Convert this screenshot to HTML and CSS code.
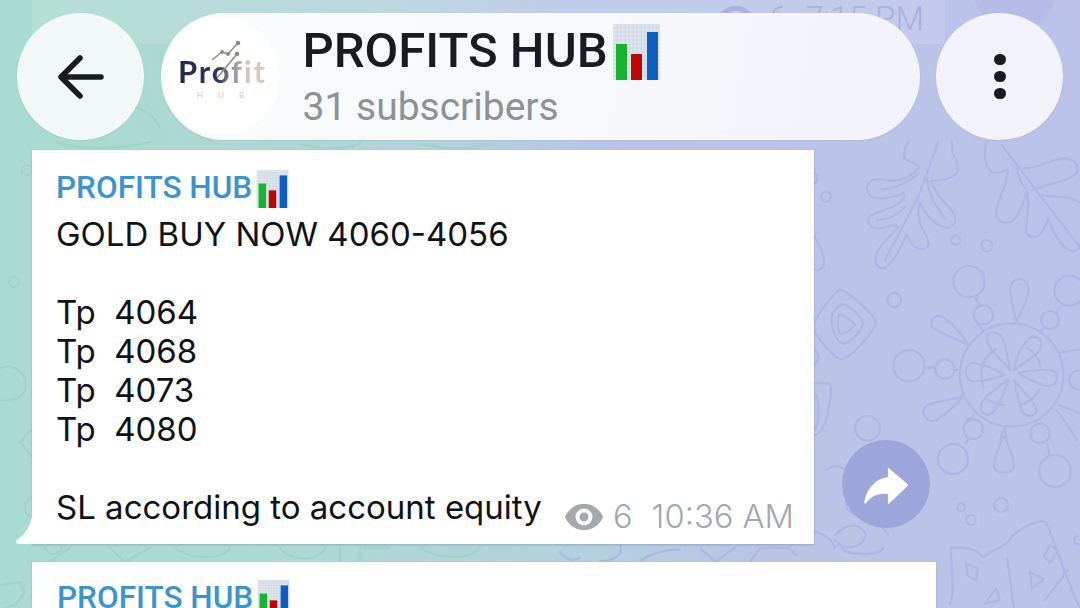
FILE: index.html
```html
<!DOCTYPE html>
<html lang="en">
<head>
<meta charset="utf-8">
<title>PROFITS HUB</title>
<link rel="stylesheet" href="styles.css">
</head>
<body>
<svg width="0" height="0" class="defs">
  <defs>
    <symbol id="bars" viewBox="0 0 47 56">
      <rect width="47" height="56" fill="#dfe5ee"/>
      <path d="M0 4H47M0 8H47M0 12H47M0 16H47M0 20H47M0 24H47M0 28H47M0 32H47M0 36H47M0 40H47M0 44H47M0 48H47M0 52H47M4 0V56M8 0V56M12 0V56M16 0V56M20 0V56M24 0V56M28 0V56M32 0V56M36 0V56M40 0V56M44 0V56" stroke="#c8d2e0" stroke-width=".6"/>
      <rect x="3" y="20" width="11" height="36" fill="#12b52b"/>
      <rect x="18" y="30" width="11" height="26" fill="#bd0606"/>
      <rect x="34" y="8" width="11" height="48" fill="#0c5fc0"/>
    </symbol>
    <symbol id="eye" viewBox="0 0 38 26">
      <path fill-rule="evenodd" d="M19 0C30 0 36 8 38 13C36 18 30 26 19 26C8 26 2 18 0 13C2 8 8 0 19 0ZM19 4.500A8.500 8.500 0 1 0 19 21.500A8.500 8.500 0 1 0 19 4.500ZM19 8.500A4.500 4.500 0 1 1 19 17.500A4.500 4.500 0 1 1 19 8.500Z"/>
    </symbol>
  </defs>
</svg>

<div class="screen">
  <svg class="wallpaper" viewBox="0 0 1080 608" width="1080" height="608" fill="none">
    <circle class="old-forward" cx="1015" cy="-12" r="42"/>
    <g class="lines-blue">
      <g transform="translate(810 140) scale(.33333)" class="crop-space">
        <path d="M295 5C280 25 275 55 295 62C310 68 322 70 328 82C300 115 265 125 235 122C205 112 175 118 170 142C172 172 200 182 235 172C255 168 272 162 283 158C285 178 270 192 240 204C205 215 172 225 175 245C180 265 205 270 225 262C245 256 258 252 265 262C240 290 205 315 197 350C192 375 210 392 228 382C255 358 275 320 290 282C298 305 310 328 340 327C360 322 360 300 345 280C328 255 322 222 328 185C352 232 385 268 420 262C442 250 440 225 420 205C392 178 372 150 362 122C385 122 420 120 438 102C450 82 440 60 428 42L425 5"/>
        <path d="M385 5L325 170L225 360M350 115C355 155 375 200 405 235M215 148C245 150 290 130 325 100M200 240C230 240 262 225 285 200"/>
        <path d="M530 5C520 40 525 85 548 98C565 102 578 92 592 90C598 125 565 170 558 215C555 245 585 258 610 240C632 218 640 190 650 155C665 205 640 265 650 282C665 300 690 290 700 270C708 255 712 245 715 235C725 270 750 320 780 332C800 336 812 325 812 310"/>
        <path d="M640 85C680 90 720 55 770 55C800 60 812 85 795 105C770 125 720 130 665 150M690 165C730 175 775 160 812 190"/>
        <path d="M575 15L640 100L720 205L812 325M620 85C625 115 640 140 650 150"/>
        <circle cx="477" cy="425" r="47"/><circle cx="520" cy="525" r="29"/>
        <circle cx="778" cy="452" r="45"/><circle cx="720" cy="540" r="27"/>
        <circle cx="297" cy="677" r="47"/><circle cx="405" cy="687" r="29"/>
        <circle cx="490" cy="868" r="29"/><circle cx="690" cy="880" r="29"/>
        <circle cx="805" cy="720" r="28"/>
        <circle cx="253" cy="480" r="21"/><circle cx="437" cy="300" r="14"/>
        <circle cx="530" cy="317" r="17"/><circle cx="48" cy="170" r="15"/>
        <circle cx="172" cy="865" r="37"/>
        <path d="M345 683H377M433 690H450M495 470L508 497M748 505L738 520M502 552L520 572M700 565L690 578M470 840L490 830"/>
        <circle cx="605" cy="705" r="155"/>
        <path d="M520 740A92 92 0 0 1 556 628M650 622A92 92 0 0 1 692 680M690 745A92 92 0 0 1 630 795M580 795A92 92 0 0 1 530 775"/>
        <path d="M600 690C575 660 525 620 530 590C540 570 570 575 580 600C588 625 595 660 600 690Z"/>
        <path d="M612 690C618 650 640 600 670 590C695 590 700 615 685 635C665 655 635 675 612 690Z"/>
        <path d="M625 700C660 690 710 685 735 695C750 715 735 740 710 738C680 730 650 715 625 700Z"/>
        <path d="M612 720C630 745 675 785 680 810C675 832 645 835 635 810C625 785 618 750 612 720Z"/>
        <path d="M595 720C585 750 565 815 535 825C510 822 505 795 525 775C545 755 570 735 595 720Z"/>
        <path d="M585 705C555 715 505 730 480 722C460 705 465 672 490 668C525 675 560 690 585 705Z"/>
        <path d="M620 545C640 500 665 460 652 430C635 408 605 415 600 445C602 480 612 515 620 545Z"/>
        <path d="M473 612C445 600 385 580 365 558C360 530 385 520 405 535C430 555 458 585 473 612Z"/>
        <path d="M458 770C420 780 365 785 345 800C330 830 355 850 380 840C410 820 440 795 458 770Z"/>
        <path d="M750 638C780 630 815 630 830 625M745 795C775 805 810 820 830 830M590 900L585 860L570 900M740 810C760 840 790 880 800 900"/>
        <path d="M90 448C120 460 190 520 198 545C195 575 125 650 98 657C75 660 15 590 10 560C15 530 70 460 90 448Z"/>
        <path d="M97 492C120 495 155 530 160 550C155 575 120 610 98 612C78 605 62 560 65 530C70 510 85 495 97 492Z"/>
        <path d="M88 522C100 525 130 545 135 555C125 568 105 582 92 582C82 570 80 535 88 522Z"/>
        <path d="M15 730H55C65 735 65 755 60 780C55 825 45 875 15 885M15 760C28 780 30 840 15 870"/>
        <path d="M15 290C30 320 45 345 42 375C35 392 22 392 15 388M15 100C25 105 25 120 15 130M15 630C28 645 28 660 15 672"/>
      </g>
      <path d="M1004 436C1012 452 1014 462 1014 466C1012 475 996 475 994 466C994 460 998 448 1004 436Z"/>
      <circle cx="953" cy="459" r="15"/><circle cx="1055" cy="471" r="16"/>
      <circle cx="1001" cy="505" r="7"/><circle cx="961" cy="507" r="4"/><circle cx="971" cy="520" r="5"/>
      <path d="M966 443L970 438M1047 444L1050 456M1078 535C1073 538 1072 546 1080 544"/>
      <path d="M951 548C962 546 970 548 978 552C982 560 985 556 990 552C1000 548 1008 544 1012 536C1022 528 1038 518 1046 522C1052 535 1060 560 1068 580C1072 590 1076 600 1080 608M951 548C950 565 956 590 950 604"/>
      <path d="M966 564L978 568L976 580L968 576ZM996 588L1000 600L985 604ZM1030 572L1044 579L1032 588ZM1050 545L1058 551L1050 563L1044 556ZM1007 558L1014 608M1068 570L1045 600"/>
      <path d="M826 470C836 462 850 468 850 482C850 495 842 500 848 510C858 520 882 520 888 535M835 535C850 520 862 525 866 535C862 548 845 552 835 540"/>
      <path d="M805 535C815 528 830 535 835 548M842 548C848 556 878 556 884 548M750 562L760 548H790L796 555M700 548L715 562L735 548M620 546C625 555 610 562 600 561M560 552C566 560 572 562 580 558M640 562C645 555 670 548 680 550"/>
    </g>
    <g class="lines-green">
      <path d="M0 368C15 362 26 375 26 385C26 398 12 402 0 400"/>
      <circle cx="14" cy="282" r="5"/><circle cx="27" cy="170" r="5"/>
      <path d="M31 430L20 442L31 456M31 498C22 502 24 514 31 518"/>
      <path d="M0 585L20 582L25 592L15 605L5 608"/>
      <path d="M45 548C50 556 58 556 62 548M50 562L70 548M110 548L125 562L150 548M175 548C190 560 225 560 230 548M280 548C290 562 320 562 325 548M340 562V548M360 562V548H390M420 548C440 560 470 560 480 548"/>
      <path d="M55 142C85 150 120 150 150 142M300 144C320 150 350 150 360 143M420 144C450 150 470 150 490 144M110 112C130 100 150 108 160 128"/>
    </g>
  </svg>

  <header class="topbar">
    <button class="round-btn back" aria-label="Back">
      <svg viewBox="0 0 46 44" width="46" height="44" fill="none" stroke="#181c20" stroke-width="5.500" stroke-linecap="round" stroke-linejoin="round"><path d="M22 3L3 22L22 41M3 22H43"/></svg>
    </button>
    <div class="title-pill">
      <div class="avatar">
        <svg class="avatar-graph" viewBox="0 0 40 44" width="40" height="44" fill="none" stroke="#8f887a" stroke-width="1.400">
          <path d="M4 21L14 13L20 15L30 4"/>
          <path d="M9 39L29 15"/>
          <circle cx="30" cy="4" r="1.600" fill="#8f887a"/>
          <circle cx="29" cy="15" r="1.600" fill="#8f887a"/>
          <circle cx="14" cy="13" r="1.200" fill="#8f887a"/>
          <circle cx="20" cy="15" r="1.200" fill="#8f887a"/>
        </svg>
        <div class="avatar-word">Profit</div>
        <div class="avatar-sub">HUB</div>
      </div>
      <div class="title-text">
        <div class="title-line"><span>PROFITS HUB</span><svg class="title-icon"><use href="#bars"/></svg></div>
        <div class="subs">31 subscribers</div>
      </div>
    </div>
    <button class="round-btn more" aria-label="More">
      <span class="dot"></span><span class="dot"></span><span class="dot"></span>
    </button>
  </header>

  <main class="feed">
    <div class="old-bubble">
      <svg class="old-eye"><use href="#eye"/></svg>
      <span>6</span><span class="old-time">7:15 PM</span>
    </div>

    <div class="msg-row">
      <article class="bubble first">
        <svg class="tail" viewBox="0 0 17 40" width="17" height="40"><path d="M17 0V40H3C0 40 -1 37 2 35C10 30 17 20 17 0Z" fill="#fff"/></svg>
        <div class="sender"><span>PROFITS HUB</span><svg class="sender-icon"><use href="#bars"/></svg></div>
        <div class="body">GOLD BUY NOW 4060-4056

Tp  4064
Tp  4068
Tp  4073
Tp  4080</div>
        <div class="last-line">
          <span>SL according to account equity</span>
          <span class="meta">
            <svg class="meta-eye"><use href="#eye"/></svg>
            <span class="views">6</span>
            <span>10:36 AM</span>
          </span>
        </div>
      </article>
      <button class="forward" aria-label="Forward">
        <svg viewBox="-1 -1 48 40" width="45" height="38"><path d="M25 0L46 18L25 38V27C14 26 7 29 1 37C0 38 -1 37 0 35C3 21 12 11 25 10Z" fill="#fff" stroke="#fff" stroke-width="1" stroke-linejoin="round"/></svg>
      </button>
    </div>

    <article class="bubble second">
      <div class="sender"><span>PROFITS HUB</span><svg class="sender-icon"><use href="#bars"/></svg></div>
    </article>
  </main>
</div>
</body>
</html>
```
FILE: styles.css
```css
* { box-sizing: border-box; }
html, body { margin: 0; padding: 0; }
body { width: 1080px; height: 608px; overflow: hidden; font-family: Roboto, "Liberation Sans", sans-serif; }
button { border: 0; padding: 0; font: inherit; }
.defs { position: absolute; }

.screen {
  position: relative;
  width: 1080px;
  height: 608px;
  overflow: hidden;
  background: linear-gradient(72deg, #aadbd0 0%, #aadbd0 20%, #b3d2dc 45%, #b9c5e7 60%, #bcc2ea 100%);
}
.wallpaper { position: absolute; left: 0; top: 0; }
.old-forward { fill: #b5bae6; }
.lines-blue { stroke: #b0b6e4; stroke-width: 2.200; stroke-linecap: round; stroke-linejoin: round; }
.crop-space { stroke-width: 6.600; }
.lines-green { stroke: #a0d3c8; stroke-width: 2.200; stroke-linecap: round; stroke-linejoin: round; }

.topbar {
  position: absolute;
  z-index: 2;
  left: 17px;
  top: 13px;
  width: 1046px;
  height: 127px;
  display: flex;
  justify-content: space-between;
}
.round-btn {
  width: 127px;
  height: 127px;
  border-radius: 50%;
  display: flex;
  align-items: center;
  justify-content: center;
  box-shadow: 0 1px 2px rgba(90, 110, 130, .12);
}
.back { background: #f1f8f7; }
.more { background: #f1f2fa; flex-direction: column; gap: 5.500px; padding-left: 1px; }
.dot { width: 11.500px; height: 11.500px; border-radius: 50%; background: #181c20; }

.title-pill {
  width: 759px;
  height: 127px;
  border-radius: 64px;
  background: linear-gradient(100deg, #f9fcfc 0%, #f6f8fb 55%, #f2f3fa 100%);
  display: flex;
  box-shadow: 0 1px 2px rgba(90, 110, 130, .12);
}
.avatar {
  position: relative;
  width: 118px;
  height: 118px;
  margin: 4px 23px 0 1px;
  border-radius: 50%;
  background: #fff;
  display: flex;
  flex-direction: column;
  align-items: center;
  padding-top: 39px;
  flex: none;
}
.avatar-graph { position: absolute; left: 46px; top: 22px; }
.avatar-word {
  font-family: Lato, sans-serif;
  font-weight: 700;
  font-size: 31px;
  line-height: 31px;
  letter-spacing: 1.800px;
  margin-left: 4px;
  background: linear-gradient(90deg, #1d2b4d 0%, #2c3856 45%, #8f96a0 62%, #d8cdb8 80%, #d4c8b0 100%);
  -webkit-background-clip: text;
  background-clip: text;
  color: transparent;
}
.avatar-sub {
  font-family: Lato, sans-serif;
  font-size: 8px;
  line-height: 10px;
  letter-spacing: 15px;
  margin: 3px 0 0 15px;
  color: #d8ccb6;
}
.title-text { padding-top: 7px; min-width: 0; }
.title-line {
  display: flex;
  align-items: flex-start;
  font-weight: 500;
  font-size: 49px;
  line-height: 62px;
  color: #181c20;
  height: 60px;
}
.title-icon { width: 47px; height: 56px; margin: 4px 0 0 5px; flex: none; }
.subs { font-size: 39px; line-height: 46px; color: #8b9298; margin-top: 4px; }

.feed {
  position: relative;
  z-index: 1;
  display: flex;
  flex-direction: column;
  padding-left: 32px;
}
.old-bubble {
  position: relative;
  width: 913px;
  height: 44px;
  margin-bottom: 106px;
  background: rgba(255, 255, 255, .12);
  display: flex;
  justify-content: flex-end;
  align-items: flex-end;
  gap: 14px;
  padding: 0 21px 7px 0;
  font-size: 33px;
  font-weight: 300;
  line-height: 36px;
  color: #aab0dc;
  flex: none;
}
.old-eye { width: 38px; height: 26px; fill: #aab0dc; margin-bottom: 5px; }
.old-time { margin-left: 4px; }

.msg-row { display: flex; align-items: flex-end; gap: 28px; margin-bottom: 18px; flex: none; }
.bubble { position: relative; background: #fff; box-shadow: 0 1px 2px rgba(70, 90, 120, .3); flex: none; }
.first { width: 782px; height: 394px; padding: 18px 20px 0 25px; }
.second { width: 904px; height: 80px; padding: 16px 20px 0 26px; }
.tail { position: absolute; left: -16px; bottom: 0; }

.sender {
  display: flex;
  align-items: flex-start;
  height: 40px;
  font-weight: 500;
  font-size: 31.500px;
  line-height: 40px;
  color: #3a94cf;
  margin-left: -1px;
}
.sender-icon { width: 33px; height: 38px; margin: 2px 0 0 4px; flex: none; }

.body {
  white-space: pre-wrap;
  font-family: Inter, Roboto, sans-serif;
  font-size: 33px;
  line-height: 39px;
  color: #101214;
  margin-top: 7px;
  margin-left: -1px;
}
.last-line {
  display: flex;
  justify-content: space-between;
  align-items: flex-start;
  font-family: Inter, Roboto, sans-serif;
  font-size: 33px;
  line-height: 39px;
  color: #101214;
  margin-top: 39px;
  margin-left: -1px;
}
.meta {
  display: flex;
  align-items: center;
  font-family: Inter, Roboto, sans-serif;
  font-weight: 300;
  font-size: 32.700px;
  color: #a2a8ac;
  margin-top: 9px;
}
.meta-eye { width: 38px; height: 26px; fill: #a2a8ac; margin-right: 10px; }
.views { margin-right: 19px; }

.forward {
  width: 88px;
  height: 88px;
  border-radius: 50%;
  background: #9ca6db;
  display: flex;
  align-items: center;
  justify-content: center;
  padding-top: 4px;
  margin-bottom: 16px;
  flex: none;
}
```
